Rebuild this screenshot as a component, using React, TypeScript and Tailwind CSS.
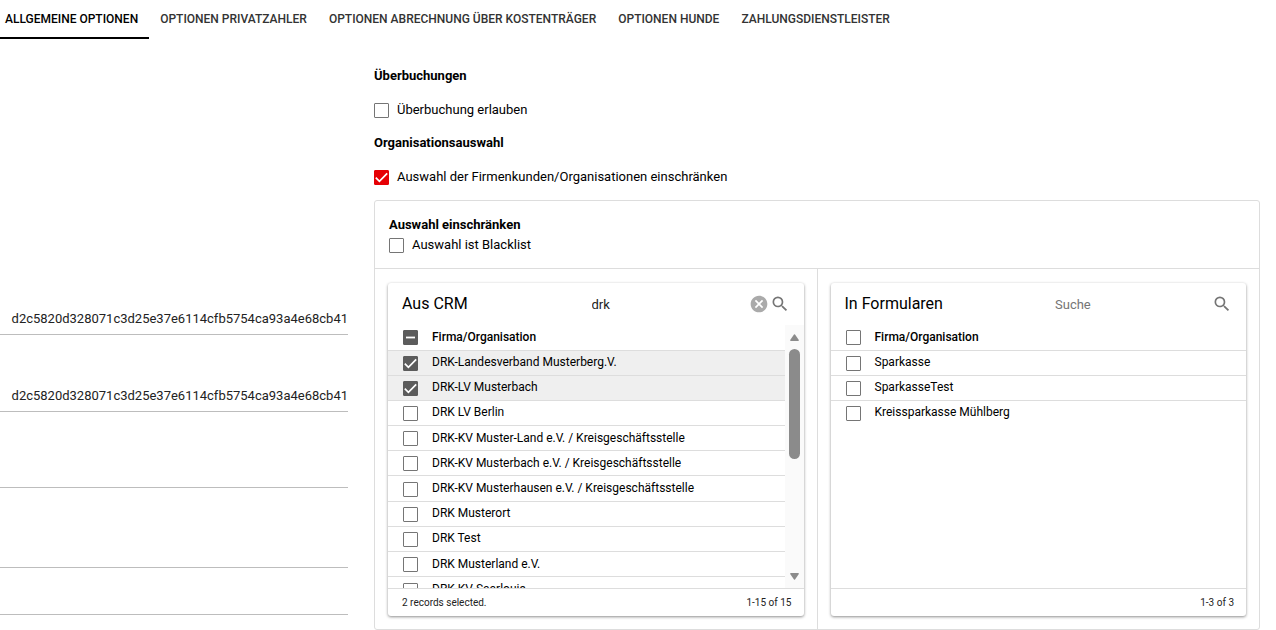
import { useState } from "react";
import { MdCancel, MdSearch } from "react-icons/md";

const tabs = [
  "ALLGEMEINE OPTIONEN",
  "OPTIONEN PRIVATZAHLER",
  "OPTIONEN ABRECHNUNG ÜBER KOSTENTRÄGER",
  "OPTIONEN HUNDE",
  "ZAHLUNGSDIENSTLEISTER",
];

const crmRows = [
  "DRK-Landesverband Musterberg.V.",
  "DRK-LV Musterbach",
  "DRK LV Berlin",
  "DRK-KV Muster-Land e.V. / Kreisgeschäftsstelle",
  "DRK-KV Musterbach e.V. / Kreisgeschäftsstelle",
  "DRK-KV Musterhausen e.V. / Kreisgeschäftsstelle",
  "DRK Musterort",
  "DRK Test",
  "DRK Musterland e.V.",
  "DRK-KV Saarlouis",
];

const formRows = ["Sparkasse", "SparkasseTest", "Kreissparkasse Mühlberg"];

const token = "d2c5820d328071c3d25e37e6114cfb5754ca93a4e68cb41";

type CheckboxProps = {
  id: string;
  label?: string;
  checked: boolean;
  partial?: boolean;
  red?: boolean;
  onChange: (value: boolean) => void;
};

function Checkbox({ id, label, checked, partial = false, red = false, onChange }: CheckboxProps) {
  const filled = checked || partial;
  const look = filled
    ? red
      ? "border-[#e60005] bg-[#e60005]"
      : "border-[#5c5c5c] bg-[#5c5c5c]"
    : "border-[#757575] bg-white";
  return (
    <span className="grid size-[15px] shrink-0">
      <input
        id={id}
        type="checkbox"
        aria-label={label}
        checked={checked}
        onChange={(e) => onChange(e.target.checked)}
        className={`col-start-1 row-start-1 size-[15px] appearance-none rounded-[1px] border ${look}`}
      />
      {filled && (
        <svg viewBox="0 0 15 15" fill="none" stroke="white" className="pointer-events-none col-start-1 row-start-1 size-[15px]">
          {partial ? (
            <path d="M3 7.5h9" strokeWidth="1.8" />
          ) : (
            <path d="M1.8 7.7l3.6 3.7 7.8-8" strokeWidth="1.7" />
          )}
        </svg>
      )}
    </span>
  );
}

function Option({ id, text, checked, red, onChange }: { id: string; text: string; checked: boolean; red?: boolean; onChange: (v: boolean) => void }) {
  return (
    <div className="flex items-center gap-2">
      <Checkbox id={id} checked={checked} red={red} onChange={onChange} />
      <label htmlFor={id} className="leading-4">
        {text}
      </label>
    </div>
  );
}

type ListCardProps = {
  id: string;
  title: string;
  rows: string[];
  initial: number[];
  query: string;
  range: string;
  scroll?: boolean;
};

function ListCard({ id, title, rows, initial, query, range, scroll = false }: ListCardProps) {
  const [selected, setSelected] = useState(initial);
  const [search, setSearch] = useState(query);
  const toggle = (i: number) =>
    setSelected(selected.includes(i) ? selected.filter((n) => n !== i) : [...selected, i]);
  const all = selected.length === rows.length;

  return (
    <section className="flex min-w-0 flex-1 flex-col rounded-[3px] bg-white shadow-[0_1px_3px_rgba(0,0,0,0.45)]">
      <header className="flex h-[42px] items-center px-3.5">
        <h3 className="flex-1 text-base">{title}</h3>
        <input
          type="text"
          aria-label={`${title} durchsuchen`}
          placeholder="Suche"
          value={search}
          onChange={(e) => setSearch(e.target.value)}
          className="h-6 w-[157px] text-[13px] text-[#222] outline-none placeholder:text-[#757575]"
        />
        {search && (
          <button type="button" aria-label="Suche leeren" onClick={() => setSearch("")} className="mr-px text-[#aaa]">
            <MdCancel size={20} />
          </button>
        )}
        <button type="button" aria-label="Suchen" className="text-[#757575]">
          <MdSearch size={20} />
        </button>
      </header>
      <div className="flex h-[263px] overflow-hidden">
        <div className="min-w-0 flex-1">
          <table className={`w-full border-collapse text-xs ${scroll ? "h-[277px]" : ""}`}>
            <thead>
              <tr className="h-[25px] border-b border-[#ddd]">
                <th className="w-11 pt-px pl-[15px] text-left">
                  <Checkbox
                    id={`${id}-all`}
                    label="Alle auswählen"
                    checked={all}
                    partial={selected.length > 0 && !all}
                    onChange={(v) => setSelected(v ? rows.map((_, i) => i) : [])}
                  />
                </th>
                <th className="text-left font-medium">Firma/Organisation</th>
              </tr>
            </thead>
            <tbody>
              {rows.map((row, i) => (
                <tr
                  key={row}
                  className={`h-[25px] border-[#ddd] ${i < rows.length - 1 ? "border-b" : ""} ${selected.includes(i) ? "bg-[#efefef]" : ""}`}
                >
                  <td className="pt-px pl-[15px]">
                    <Checkbox id={`${id}-${i}`} checked={selected.includes(i)} onChange={() => toggle(i)} />
                  </td>
                  <td className="pb-px">
                    <label htmlFor={`${id}-${i}`}>{row}</label>
                  </td>
                </tr>
              ))}
            </tbody>
          </table>
        </div>
        {scroll && (
          <div className="flex w-[19px] flex-col items-center bg-[#fafafa] pt-[9px] pb-2">
            <svg viewBox="0 0 9 7" className="h-[7px] w-[9px] fill-[#8b8b8b]">
              <path d="M4 .4Q4.5 0 5 .4L8.8 6Q9 7 8.2 7H.8Q0 7 .2 6z" />
            </svg>
            <div className="mt-2 h-[110px] w-[11px] rounded-full bg-[#8b8b8b]" />
            <svg viewBox="0 0 9 7" className="mt-auto h-[7px] w-[9px] fill-[#8b8b8b]">
              <path d="M4 6.6Q4.5 7 5 6.6L8.8 1Q9 0 8.2 0H.8Q0 0 .2 1z" />
            </svg>
          </div>
        )}
      </div>
      <footer className="flex h-7 items-center justify-between border-t border-[#ddd] pr-3 pl-3.5 text-[10px] text-[#222]">
        <span>{scroll ? `${selected.length} records selected.` : ""}</span>
        <span>{range}</span>
      </footer>
    </section>
  );
}

function Field({ label, value, className }: { label: string; value: string; className: string }) {
  return (
    <input
      type="text"
      aria-label={label}
      defaultValue={value}
      className={`block w-full border-b border-[#bdbdbd] text-right text-[13px] text-[#222] outline-none ${className}`}
    />
  );
}

export default function App() {
  const [active, setActive] = useState(0);
  const [overbook, setOverbook] = useState(false);
  const [restrict, setRestrict] = useState(true);
  const [blacklist, setBlacklist] = useState(false);

  return (
    <div className="overflow-hidden bg-white font-[Roboto,sans-serif] text-[13px] text-black">
      <nav className="-ml-1.5 flex">
        {tabs.map((tab, i) => (
          <button
            key={tab}
            type="button"
            onClick={() => setActive(i)}
            className={`h-[39px] border-b-2 px-[11px] text-xs font-medium whitespace-nowrap ${
              i === active ? "border-black text-black" : "border-transparent text-[#333]"
            }`}
          >
            {tab}
          </button>
        ))}
      </nav>

      <main className="flex gap-[26px] pr-4">
        <div className="-ml-4 w-[364px] shrink-0 pt-[264px]">
          <Field label="Token 1" value={token} className="h-8 pb-px" />
          <Field label="Token 2" value={token} className="mt-[45px] h-8 pb-px" />
          <Field label="Feld 3" value="" className="mt-11 h-8" />
          <Field label="Feld 4" value="" className="mt-12 h-8" />
          <Field label="Feld 5" value="" className="mt-[15px] h-8" />
        </div>

        <div className="min-w-0 flex-1 pt-[29px]">
          <h2 className="leading-4 font-bold">Überbuchungen</h2>
          <div className="mt-[18px]">
            <Option id="overbook" text="Überbuchung erlauben" checked={overbook} onChange={setOverbook} />
          </div>
          <h2 className="mt-[17px] leading-4 font-bold">Organisationsauswahl</h2>
          <div className="mt-[18px]">
            <Option
              id="restrict"
              text="Auswahl der Firmenkunden/Organisationen einschränken"
              checked={restrict}
              red
              onChange={setRestrict}
            />
          </div>

          <div className="mt-[15px] rounded-[3px] border border-[#ddd]">
            <div className="border-b border-[#ddd] px-3.5 pt-4 pb-[15px]">
              <h2 className="leading-4 font-bold">Auswahl einschränken</h2>
              <div className="mt-1">
                <Option id="blacklist" text="Auswahl ist Blacklist" checked={blacklist} onChange={setBlacklist} />
              </div>
            </div>
            <div className="flex">
              <div className="flex min-w-0 flex-1 border-r border-[#ddd] px-[13px] pt-3.5 pb-[13px]">
                <ListCard id="crm" title="Aus CRM" rows={crmRows} initial={[0, 1]} query="drk" range="1-15 of 15" scroll />
              </div>
              <div className="flex min-w-0 flex-1 px-[13px] pt-3.5 pb-[13px]">
                <ListCard id="forms" title="In Formularen" rows={formRows} initial={[]} query="" range="1-3 of 3" />
              </div>
            </div>
          </div>
        </div>
      </main>
    </div>
  );
}
